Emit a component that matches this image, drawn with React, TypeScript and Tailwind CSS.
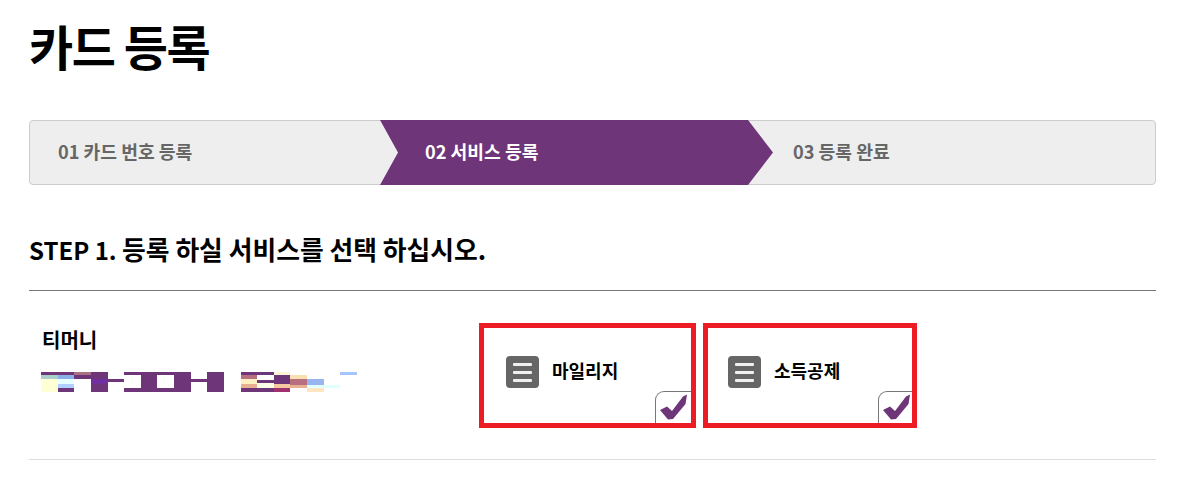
const FONT = "font-['Malgun_Gothic','Noto_Sans_CJK_KR','Noto_Sans_KR',sans-serif]";

const CELLS: [number, number, number, number, string][] = [
  [41, 372, 17, 3, "#6f3579"], [41, 375, 17, 4, "#a8d0c8"], [41, 379, 17, 13, "#ffffd5"],
  [58, 372, 16, 3, "#6f3579"], [58, 375, 16, 4, "#8ab0e8"], [58, 379, 16, 5, "#e8ffff"], [58, 384, 16, 4, "#b0d0ff"], [58, 388, 16, 4, "#6f3579"],
  [74, 372, 17, 3, "#a87080"], [74, 375, 17, 4, "#6f3579"],
  [91, 372, 17, 20, "#6f3579"], [91, 379, 17, 5, "#7030a0"],
  [108, 379, 16, 3, "#6f3579"],
  [124, 372, 17, 3, "#6f3579"], [124, 388, 17, 4, "#6f3579"],
  [141, 372, 16, 20, "#6f3579"],
  [157, 372, 17, 3, "#6f3579"], [157, 388, 17, 4, "#6f3579"],
  [174, 372, 17, 20, "#6f3579"],
  [191, 379, 16, 3, "#6f3579"],
  [207, 372, 17, 20, "#6f3579"],
  [241, 372, 16, 3, "#6f3579"], [241, 375, 16, 4, "#b87080"], [241, 379, 16, 5, "#fff0c0"], [241, 384, 16, 4, "#e8b090"], [241, 388, 16, 4, "#6f3579"],
  [257, 372, 17, 3, "#6f3579"], [257, 380, 17, 3, "#6f3579"], [257, 383, 17, 5, "#ffffe8"], [257, 388, 17, 4, "#6f3579"],
  [274, 372, 16, 3, "#fff5d5"], [274, 375, 16, 9, "#6f3579"], [274, 384, 16, 4, "#f5c8a0"], [274, 388, 16, 4, "#a03070"],
  [290, 375, 17, 4, "#f8e0b0"], [290, 379, 17, 6, "#b87080"], [290, 385, 17, 3, "#e8b090"],
  [307, 379, 17, 6, "#98b5f0"], [307, 385, 17, 3, "#e0ffff"], [307, 388, 17, 4, "#ffe5c0"],
  [324, 385, 16, 3, "#e0ffff"],
  [340, 372, 17, 3, "#a5c5ff"],
];

function Pixels() {
  return (
    <svg width="320" height="24" viewBox="41 370 320 24" shapeRendering="crispEdges" className="block mt-[16px] -ml-[1px]">
      {CELLS.map(([x, y, w, h, c], i) => (
        <rect key={i} x={x} y={y} width={w} height={h} fill={c} />
      ))}
    </svg>
  );
}

function Choice({ label, gap, boxW }: { label: string; gap: string; boxW: string }) {
  return (
    <div className={`relative h-[105px] border-[5px] border-[#ed1c24] flex items-start pt-[28px] ${gap}`}>
      <div className="w-[33px] h-[32px] rounded-[4px] bg-[#666] flex flex-col justify-center gap-[5px] px-[7px]">
        <div className="h-[3px] bg-[#f0f0f0] rounded-[1px]" />
        <div className="h-[3px] bg-[#f0f0f0] rounded-[1px]" />
        <div className="h-[3px] bg-[#f0f0f0] rounded-[1px]" />
      </div>
      <span className="ml-[13px] text-[18px] leading-[28px] font-bold text-black">{label}</span>
      <div className={`absolute right-0 bottom-0 ${boxW} h-[32px] bg-white border-l border-t border-[#777] rounded-tl-[9px]`}>
        <svg width="36" height="32" viewBox="0 0 36 32" className="absolute -left-px -top-px">
          <path d="M5 19 L12 15.5 L17 20 L28 5.5 L32 3.5 L30.5 13 L18 28 L13 28.5 Z" fill="#6f3579" />
        </svg>
      </div>
    </div>
  );
}

export default function App() {
  return (
    <div className={`${FONT} w-[1185px] h-[482px] bg-white overflow-hidden pl-[29px] pr-[29px]`}>
      <h1 className="h-[120px] pt-[10px] text-[48px] leading-[70px] font-bold text-black tracking-[-1.5px]">카드 등록</h1>

      <div className="flex h-[65px] rounded-[4px] bg-[#eee] border border-[#ccc] text-[18.2px] font-bold">
        <div className="w-[350px] pl-[28px] pb-[2px] flex items-center text-[#666]">01 카드 번호 등록</div>
        <div className="w-[393px] -my-px -mr-[25px] pl-[45px] pb-[2px] flex items-center text-white bg-[#6f3579] [clip-path:polygon(0_0,368px_0,100%_50%,368px_100%,0_100%,18px_50%)]">
          02 서비스 등록
        </div>
        <div className="flex-1 pl-[45px] pb-[2px] flex items-center text-[#666]">03 등록 완료</div>
      </div>

      <h2 className="mt-[46px] h-[60px] text-[24px] leading-[36px] font-bold text-black border-b border-[#777]">
        STEP 1. <span className="text-[25.8px]">등록 하실 서비스를 선택 하십시오.</span>
      </h2>

      <div className="flex h-[169px] border-b border-[#ddd]">
        <div className="w-[450px] pl-[13px] pt-[35px]">
          <div className="text-[20px] leading-[28px] font-bold text-black">티머니</div>
          <Pixels />
        </div>
        <div className="flex gap-[7px] pt-[32px]">
          <div className="w-[217px]"><Choice label="마일리지" gap="pl-[22px]" boxW="w-[36px]" /></div>
          <div className="w-[214px]"><Choice label="소득공제" gap="pl-[20px]" boxW="w-[34px]" /></div>
        </div>
      </div>
    </div>
  );
}
